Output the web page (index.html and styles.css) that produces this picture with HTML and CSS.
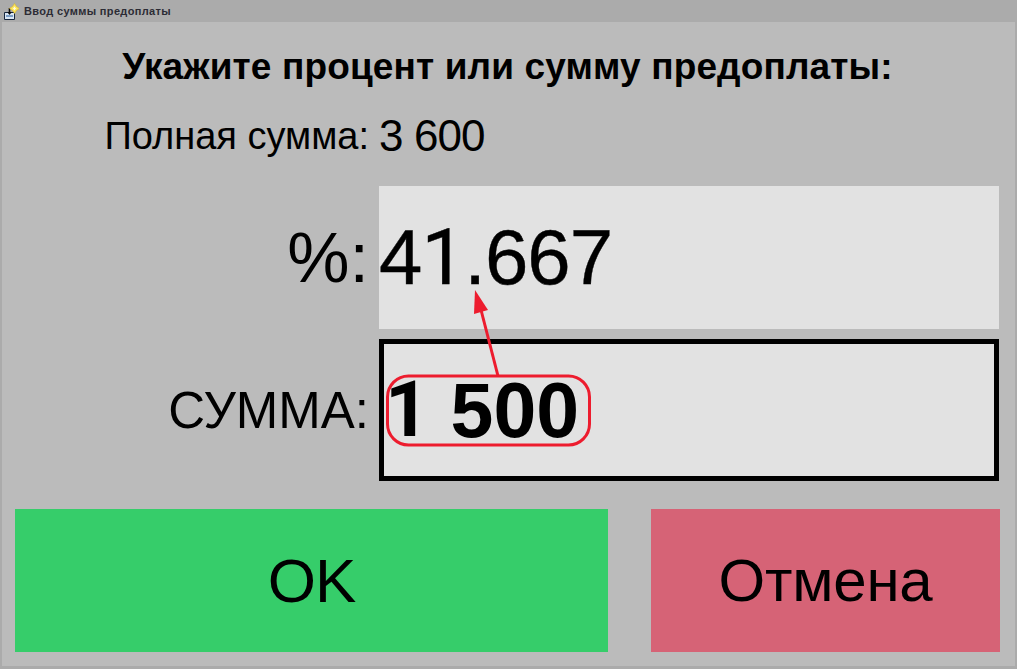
FILE: index.html
```html
<!DOCTYPE html>
<html lang="ru">
<head>
<meta charset="utf-8">
<title>Ввод суммы предоплаты</title>
<link rel="stylesheet" href="styles.css">
</head>
<body>
<div class="window">
  <header class="titlebar">
    <svg class="app-icon" width="16" height="18" viewBox="0 0 16 18">
      <path d="M1.5 10.5h10v7h-10z" fill="#d9e6f4" stroke="#16263e"/>
      <path d="M3 14h7" stroke="#5b86b8" stroke-width="1.5"/>
      <path d="M6.5 6v6" stroke="#0c0c0c" stroke-width="1.6"/>
      <path d="M4.5 10l2 3 2-3z" fill="#0c0c0c"/>
      <path d="M11.5 1.5l2 3 3 2-3 2-2 3-2-3-3-2 3-2z" fill="#fbe35a" stroke="#d8b52e" stroke-width=".6"/>
      <path d="M11.5 4.5l1 1.5 1 .5-1 .5-1 1.5-1-1.5-1-.5 1-.5z" fill="#fffbe0"/>
    </svg>
    <span class="title">Ввод суммы предоплаты</span>
  </header>
  <main class="content">
    <h1 class="heading">Укажите процент или сумму предоплаты:</h1>
    <div class="form">
      <div class="label label-small">Полная сумма:</div>
      <div class="total">3 600</div>
      <div class="label label-big">%:</div>
      <div class="field field-percent">4<span class="one">1</span>.667</div>
      <div class="label label-mid">СУММА:</div>
      <div class="field field-sum"><span class="one">1</span>&nbsp;500</div>
    </div>
    <div class="actions">
      <button class="btn btn-ok">OK</button>
      <button class="btn btn-cancel">Отмена</button>
    </div>
  </main>
  <svg class="annotation" width="1017" height="669" viewBox="0 0 1017 669">
    <rect x="387.5" y="376" width="202" height="69" rx="21" fill="none" stroke="#ed1c2e" stroke-width="3"/>
    <path d="M498 376L480 306" stroke="#ed1c2e" stroke-width="3" fill="none"/>
    <path d="M475 290L488 310L474 314Z" fill="#ed1c2e"/>
  </svg>
</div>
</body>
</html>
```
FILE: styles.css
```css
* { box-sizing: border-box; }
html, body { margin: 0; height: 100%; }
body { font-family: "Liberation Sans", Arial, sans-serif; color: #000; background: #ababab; overflow: hidden; }
.window { position: relative; width: 1017px; height: 669px; padding: 0 2px 3px; background: #ababab; display: flex; flex-direction: column; }
.titlebar { height: 22px; flex: none; display: flex; align-items: center; gap: 5px; padding-left: 1px; }
.app-icon { flex: none; }
.title { font-size: 11px; letter-spacing: .35px; font-weight: bold; color: #2c2c35; }
.content { flex: 1; background: #bbbbbb; padding: 0 15px 0 13px; display: flex; flex-direction: column; }
.heading { margin: 24px 0 0; height: 42px; font-size: 37px; letter-spacing: .14px; line-height: 42px; font-weight: bold; text-align: center; white-space: nowrap; }
.form { display: grid; grid-template-columns: 354px 620px; column-gap: 10px; grid-template-rows: 80px 143px 142px; row-gap: 10px; margin-top: 8px; }
.label { text-align: right; white-space: nowrap; align-self: center; }
.label-small { font-size: 38px; }
.label-big { font-size: 70px; }
.label-mid { font-size: 51px; }
.total { font-size: 44px; letter-spacing: -.9px; align-self: center; }
.field { background: #e2e2e2; display: flex; align-items: center; white-space: nowrap; }
.field-percent { font-size: 78px; letter-spacing: -1px; -webkit-text-stroke: .4px #000; }
.field-sum { font-size: 77px; font-weight: bold; border: 5px solid #000; padding-left: 1px; }
.one { font-family: Roboto, "Liberation Sans", sans-serif; }
.actions { display: flex; justify-content: space-between; margin-top: 28px; }
.btn { height: 143px; border: 0; padding: 0; font-family: inherit; color: #000; font-size: 62px; }
.btn-ok { width: 593px; background: #36cd6a; letter-spacing: -1px; }
.btn-cancel { width: 349px; background: #d66376; font-size: 60px; letter-spacing: -.2px; }
.annotation { position: absolute; left: 0; top: 0; pointer-events: none; }
```
